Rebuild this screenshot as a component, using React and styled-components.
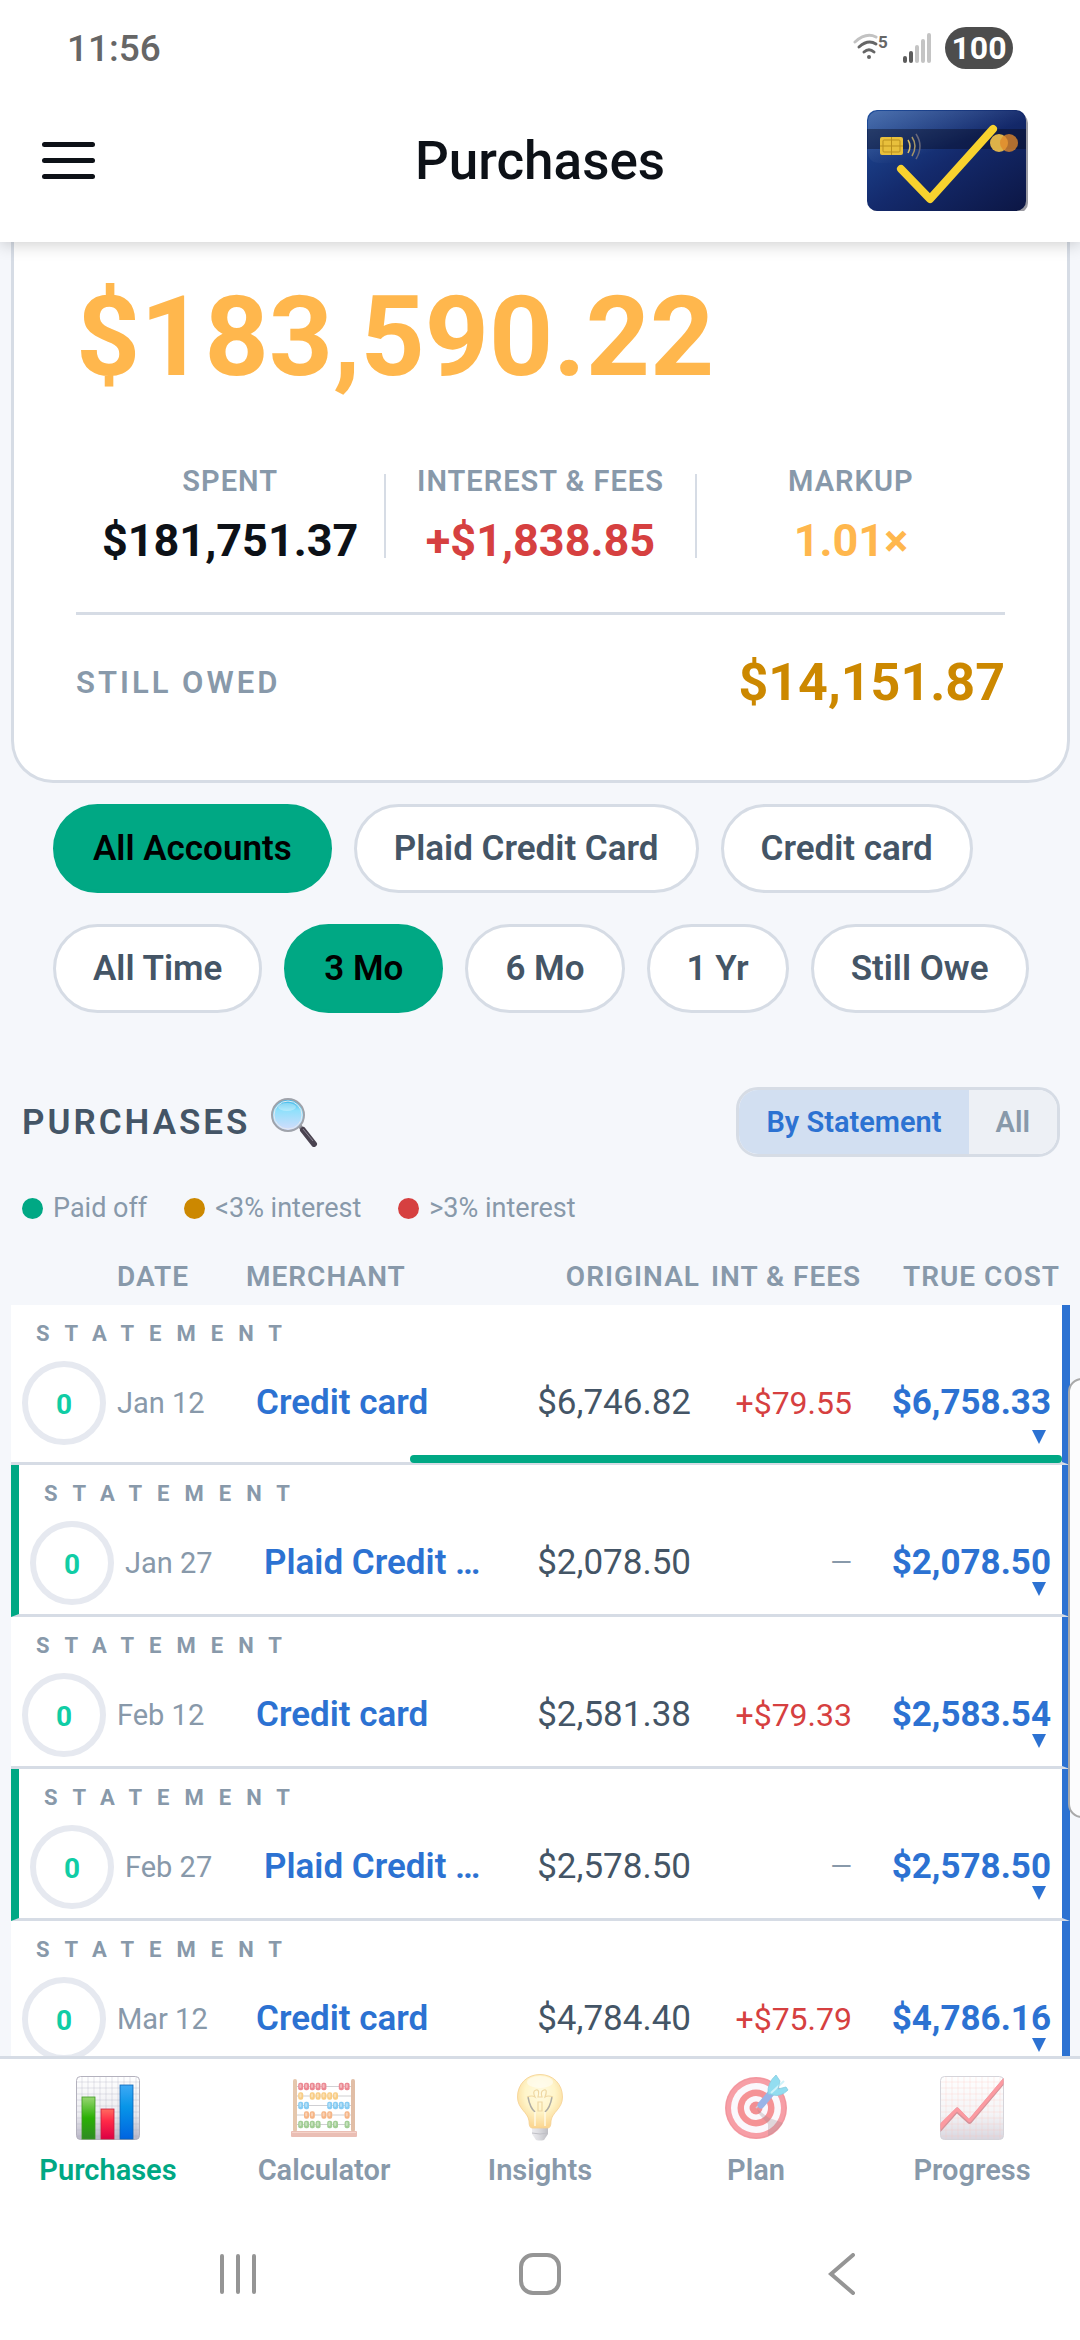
import React, { useState } from 'react';
import styled, { createGlobalStyle, css } from 'styled-components';

const colors = {
  page: '#f5f7fb',
  white: '#ffffff',
  ink: '#0d1117',
  slate: '#445566',
  muted: '#8899aa',
  border: '#d6dce5',
  green: '#00a884',
  amber: '#ffb74d',
  gold: '#cc8800',
  red: '#d64040',
  blue: '#2c72d2'
};

const GlobalStyle = createGlobalStyle`
  * {
    box-sizing: border-box;
  }
  body {
    margin: 0;
    background: ${colors.white};
    font-family: Roboto, "Noto Sans", sans-serif;
    color: ${colors.ink};
  }
  button {
    font: inherit;
    border: none;
    padding: 0;
    background: none;
    cursor: pointer;
  }
  a {
    color: inherit;
    text-decoration: none;
  }
  svg {
    display: block;
  }
`;

const Screen = styled.div`
  height: 100vh;
  display: flex;
  flex-direction: column;
  overflow: hidden;
`;

const StatusBar = styled.div`
  flex: none;
  position: relative;
  z-index: 2;
  height: 96px;
  padding: 0 67px;
  display: flex;
  align-items: center;
  justify-content: space-between;
  background: ${colors.white};
`;

const Clock = styled.span`
  font-size: 37px;
  font-weight: 500;
  color: #666666;
`;

const StatusIcons = styled.div`
  display: flex;
  align-items: center;
  gap: 14px;
`;

const Battery = styled.span`
  width: 68px;
  height: 42px;
  border-radius: 21px;
  background: #4d4d4d;
  color: ${colors.white};
  font-size: 32px;
  line-height: 43px;
  font-weight: 700;
  text-align: center;
`;

const Header = styled.header`
  flex: none;
  position: relative;
  z-index: 1;
  display: grid;
  grid-template-columns: 1fr auto 1fr;
  align-items: center;
  padding: 14px 42px 31px;
  background: ${colors.white};
  box-shadow: 0 2px 16px rgba(0, 0, 0, 0.2);
`;

const MenuButton = styled.button`
  width: 53px;
  display: flex;
  flex-direction: column;
  gap: 11px;
`;

const MenuLine = styled.span`
  height: 5px;
  border-radius: 3px;
  background: ${colors.ink};
`;

const Title = styled.h1`
  margin: 0;
  font-size: 53px;
  line-height: 60px;
  font-weight: 500;
`;

const Logo = styled.div`
  justify-self: end;
  padding-right: 10px;
`;

const Content = styled.main`
  flex: 1 1 0;
  min-height: 0;
  overflow: hidden;
  padding: 0 10px 0 11px;
  background: ${colors.page};
`;

const SummaryCard = styled.section`
  padding: 28px 62px 67px;
  background: ${colors.white};
  border: 3px solid ${colors.border};
  border-top: none;
  border-radius: 0 0 42px 42px;
`;

const Total = styled.div`
  font-size: 112px;
  line-height: 134px;
  font-weight: 700;
  color: ${colors.amber};
`;

const Stats = styled.div`
  display: flex;
  align-items: center;
  margin: 60px 0 44px;
`;

const Stat = styled.div`
  flex: 1 1 0;
  display: flex;
  flex-direction: column;
  align-items: center;
  gap: 16px;
`;

const StatLabel = styled.span`
  font-size: 29px;
  line-height: 34px;
  font-weight: 600;
  letter-spacing: 1px;
  color: ${colors.muted};
`;

const StatValue = styled.span`
  font-size: 45px;
  line-height: 54px;
  font-weight: 700;
  color: ${({ $color }) => $color};
`;

const StatDivider = styled.span`
  width: 2px;
  height: 84px;
  background: ${colors.border};
`;

const OwedRow = styled.div`
  display: flex;
  align-items: center;
  justify-content: space-between;
  padding-top: 38px;
  border-top: 3px solid ${colors.border};
  line-height: 60px;
`;

const OwedLabel = styled.span`
  font-size: 31px;
  font-weight: 600;
  letter-spacing: 3px;
  color: ${colors.muted};
`;

const OwedValue = styled.span`
  font-size: 52px;
  font-weight: 700;
  color: ${colors.gold};
`;

const Filters = styled.div`
  display: flex;
  flex-direction: column;
  gap: 31px;
  padding: 21px 42px 0;
`;

const ChipRow = styled.div`
  display: flex;
  gap: 22px;
`;

const Chip = styled.button`
  && {
    height: 89px;
    padding: 0 37px;
    border: 3px solid ${({ $active }) => ($active ? colors.green : colors.border)};
    border-radius: 45px;
    background: ${({ $active }) => ($active ? colors.green : colors.white)};
    color: ${({ $active }) => ($active ? '#000000' : colors.slate)};
    font-size: 35px;
    font-weight: 600;
    white-space: nowrap;
  }
`;

const SectionHead = styled.div`
  display: flex;
  align-items: center;
  justify-content: space-between;
  margin-top: 74px;
  padding: 0 10px 0 11px;
`;

const SectionTitle = styled.h2`
  display: flex;
  align-items: center;
  gap: 20px;
  margin: 0;
  font-size: 35px;
  font-weight: 600;
  letter-spacing: 3px;
  color: ${colors.slate};
`;

const Segmented = styled.div`
  display: flex;
  height: 70px;
  border: 3px solid ${colors.border};
  border-radius: 22px;
  overflow: hidden;
`;

const Segment = styled.button`
  && {
    padding: 0 27px;
    font-size: 29px;
    font-weight: 600;
    color: ${({ $active }) => ($active ? colors.blue : colors.muted)};
    background: ${({ $active }) => ($active ? '#d2dff1' : '#edf0f5')};
  }
`;

const Legend = styled.div`
  display: flex;
  gap: 37px;
  margin-top: 34px;
  padding: 0 11px;
`;

const LegendItem = styled.span`
  display: flex;
  align-items: center;
  gap: 10px;
  font-size: 27px;
  line-height: 34px;
  color: ${colors.muted};
`;

const Dot = styled.span`
  width: 21px;
  height: 21px;
  border-radius: 50%;
  background: ${({ $color }) => $color};
`;

const Table = styled.table`
  display: block;
  margin-top: 35px;
`;

const TableHead = styled.thead`
  display: block;
`;

const TableBody = styled.tbody`
  display: block;
`;

const columns = css`
  display: grid;
  grid-template-columns: 84px 118px minmax(0, 1fr) 178px 150px 188px;
  column-gap: 11px;
  align-items: center;
`;

const HeadRow = styled.tr`
  ${columns}
  padding: 0 10px 11px 11px;
`;

const HeadCell = styled.th`
  padding: 0;
  font-size: 28px;
  line-height: 34px;
  font-weight: 600;
  letter-spacing: 1px;
  white-space: nowrap;
  text-align: ${({ $right }) => ($right ? 'right' : 'left')};
  color: ${colors.muted};
`;

const Row = styled.tr`
  ${columns}
  position: relative;
  padding: 16px 11px ${({ $hasBar }) => ($hasBar ? '17px' : '9px')};
  background: ${colors.white};
  border-bottom: 3px solid ${colors.border};
  border-right: 8px solid ${colors.blue};
  border-left: ${({ $paid }) => ($paid ? `8px solid ${colors.green}` : 'none')};
`;

const RowLabel = styled.td`
  grid-column: 1 / -1;
  padding: 0 0 14px 14px;
  font-size: 22px;
  line-height: 26px;
  font-weight: 700;
  letter-spacing: 15px;
  color: ${colors.muted};
`;

const Cell = styled.td`
  padding: 0;
  line-height: 42px;
  white-space: nowrap;
`;

const Ring = styled.span`
  display: block;
  width: 84px;
  height: 84px;
  border: 6px solid #e6e9f0;
  border-radius: 50%;
  font-size: 28px;
  line-height: 76px;
  font-weight: 700;
  text-align: center;
  color: #10cda5;
`;

const DateCell = styled(Cell)`
  font-size: 29px;
  color: ${colors.muted};
`;

const MerchantCell = styled(Cell)`
  padding-left: 10px;
  overflow: hidden;
  text-overflow: ellipsis;
  font-size: 35px;
  font-weight: 600;
  color: ${colors.blue};
`;

const OriginalCell = styled(Cell)`
  font-size: 35px;
  text-align: right;
  color: ${colors.slate};
`;

const FeeCell = styled(Cell)`
  font-size: ${({ $empty }) => ($empty ? '28px' : '32px')};
  text-align: right;
  color: ${({ $empty }) => ($empty ? colors.muted : colors.red)};
`;

const CostCell = styled(Cell)`
  font-size: 35px;
  font-weight: 700;
  text-align: right;
  color: ${colors.blue};
`;

const ExpandButton = styled.button`
  && {
    position: absolute;
    right: 16px;
    bottom: 18px;
  }
`;

const PaidBar = styled.span`
  position: absolute;
  right: 0;
  bottom: -1px;
  height: 8px;
  border-radius: 4px;
  background: ${colors.green};
`;

const EdgeHandle = styled.div`
  position: absolute;
  z-index: 2;
  top: 1378px;
  right: -24px;
  width: 36px;
  height: 440px;
  border: 2px solid #a9a9a9;
  border-radius: 14px;
  background: #fcfcfd;
`;

const BottomNav = styled.nav`
  flex: none;
  display: grid;
  grid-template-columns: repeat(5, 1fr);
  padding: 15px 0 21px;
  border-top: 3px solid ${colors.border};
  background: ${colors.white};
`;

const NavItem = styled.a`
  display: flex;
  flex-direction: column;
  align-items: center;
  gap: 11px;
  font-size: 29px;
  line-height: 34px;
  font-weight: 600;
  color: ${({ $active }) => ($active ? colors.green : colors.muted)};

  svg {
    opacity: ${({ $active }) => ($active ? 1 : 0.55)};
  }
`;

const SystemBar = styled.div`
  flex: none;
  height: 132px;
  padding: 0 87px;
  display: grid;
  grid-template-columns: repeat(3, 1fr);
  place-items: center;
  background: ${colors.white};
`;

const WifiIcon = () => (
  <svg width="36" height="30" viewBox="0 0 36 30" fill="none" strokeLinecap="round" strokeWidth="3">
    <path d="M2 9 Q13 -1 23 4" stroke="#c2c2c2" />
    <path d="M6 14 Q15 6 23 11" stroke="#666" />
    <path d="M11 19 Q16 14.500 21 19" stroke="#666" />
    <circle cx="16" cy="24" r="2" fill="#666" />
    <text x="25" y="15" fill="#666" fontSize="17" fontWeight="700" fontFamily="Roboto">5</text>
  </svg>
);

const SignalIcon = () => (
  <svg width="28" height="30" viewBox="0 0 28 30" strokeLinecap="round" strokeWidth="4">
    <path d="M2 25v3M8 20v8" stroke="#5c5c5c" />
    <path d="M14 14v14M20 8v20M26 2v26" stroke="#c4c4c4" />
  </svg>
);

const CardLogo = () => (
  <svg width="162" height="101" viewBox="0 0 162 101" fill="none">
    <defs>
      <linearGradient id="cardBase" x1="0" y1="0" x2="1" y2="1">
        <stop offset="0" stopColor="#1f4e9c" />
        <stop offset="0.5" stopColor="#142a6c" />
        <stop offset="1" stopColor="#0c1644" />
      </linearGradient>
      <linearGradient id="cardShine" x1="0" y1="0" x2="0.6" y2="0.6">
        <stop offset="0" stopColor="#fff" stopOpacity="0.2" />
        <stop offset="1" stopColor="#fff" stopOpacity="0" />
      </linearGradient>
    </defs>
    <rect x="4" y="3" width="158" height="100" rx="10" fill="#9b9ba3" />
    <rect x="1" y="0" width="159" height="101" rx="10" fill="url(#cardBase)" />
    <rect x="2" y="1" width="157" height="52" rx="10" fill="url(#cardShine)" />
    <rect x="1" y="19" width="159" height="20" fill="#06091c" fillOpacity="0.42" />
    <rect x="14" y="27" width="23" height="18" rx="2" fill="#e8c03c" />
    <rect x="17" y="30" width="17" height="12" rx="1" stroke="#b98f1c" />
    <path d="M25.500 27v18M14 36h23" stroke="#b98f1c" />
    <path d="M42 30q4 6 0 13" stroke="#d9bd6a" strokeWidth="1.500" />
    <path d="M46 27q6 9 0 19" stroke="#a69566" strokeWidth="1.500" />
    <path d="M50 24q8 12 0 25" stroke="#68687a" strokeWidth="1.500" />
    <path d="M35 59L64 89L127 19" stroke="#f8d22e" strokeWidth="8" strokeLinecap="round" strokeLinejoin="round" />
    <circle cx="133" cy="33" r="9" fill="#e9bb4a" fillOpacity="0.95" />
    <circle cx="143" cy="33" r="9" fill="#e0882a" fillOpacity="0.78" />
  </svg>
);

const SearchIcon = () => (
  <svg width="48" height="50" viewBox="0 0 48 50">
    <defs>
      <linearGradient id="lens" x1="0" y1="0" x2="0" y2="1">
        <stop offset="0" stopColor="#35b4e8" />
        <stop offset="0.35" stopColor="#8fe0fb" />
        <stop offset="1" stopColor="#d6dcfb" />
      </linearGradient>
    </defs>
    <path d="M29 28l4 5" stroke="#8b8b93" strokeWidth="4" />
    <path d="M33 33l11 14" stroke="#4a4350" strokeWidth="6" strokeLinecap="round" />
    <path d="M33 32l10 12" stroke="#8a8592" strokeWidth="1" />
    <circle cx="18" cy="18" r="16" fill="url(#lens)" stroke="#9fa3ab" strokeWidth="2" />
    <circle cx="18" cy="18" r="14" fill="none" stroke="#e3e9f0" strokeWidth="1" />
    <ellipse cx="17" cy="10" rx="9" ry="4" fill="#fff" fillOpacity="0.3" />
  </svg>
);

const gridLines = [6, 12, 18, 24, 30, 36, 42, 48, 54, 60];

const BarsIcon = () => (
  <svg width="68" height="68" viewBox="-2 -2 68 68">
    <defs>
      <linearGradient id="paper" x1="0" y1="0" x2="0" y2="1">
        <stop offset="0" stopColor="#fff" />
        <stop offset="0.6" stopColor="#ececf0" />
        <stop offset="1" stopColor="#b9b6c6" />
      </linearGradient>
      <linearGradient id="barGreen" x1="0" y1="0" x2="0" y2="1">
        <stop offset="0" stopColor="#98d672" />
        <stop offset="0.5" stopColor="#2bb005" />
        <stop offset="1" stopColor="#2f8a24" />
      </linearGradient>
      <linearGradient id="barRed" x1="0" y1="0" x2="0" y2="1">
        <stop offset="0" stopColor="#ff6b60" />
        <stop offset="0.4" stopColor="#ff2a48" />
        <stop offset="1" stopColor="#dc0044" />
      </linearGradient>
      <linearGradient id="barBlue" x1="0" y1="0" x2="0" y2="1">
        <stop offset="0" stopColor="#3fa9f5" />
        <stop offset="0.4" stopColor="#0795e8" />
        <stop offset="1" stopColor="#0064e0" />
      </linearGradient>
    </defs>
    <rect x="0.500" y="0.500" width="63" height="63" rx="4" fill="url(#paper)" stroke="#b3b1bd" />
    {gridLines.map(n => (
      <path key={n} d={`M${n} 1v62M1 ${n}h62`} stroke="#a8a8b8" strokeOpacity="0.3" />
    ))}
    <rect x="6" y="21" width="13" height="42" fill="url(#barGreen)" stroke="#3f9a22" strokeWidth="0.800" />
    <rect x="25" y="33" width="13" height="30" fill="url(#barRed)" stroke="#c91c3c" strokeWidth="0.800" />
    <rect x="44" y="9" width="13" height="54" fill="url(#barBlue)" stroke="#0a63b5" strokeWidth="0.800" />
  </svg>
);

const beadRows = [
  { color: '#dd2a3c', beads: [0, 1, 2, 3, 4, 7, 8] },
  { color: '#f5a623', beads: [0, 2, 3, 4, 5, 6] },
  { color: '#26a3ea', beads: [0, 1, 5, 6, 7, 8] },
  { color: '#f07a24', beads: [1, 2, 4, 5, 8] },
  { color: '#57a63f', beads: [0, 1, 2, 3, 5, 6, 8] }
];

const AbacusIcon = () => (
  <svg width="68" height="68" viewBox="-1 -5 68 68">
    {beadRows.map(({ color, beads }, row) => (
      <g key={color}>
        <path d={`M5 ${7.5 + row * 9.5}h56`} stroke="#a9a9b0" strokeWidth="1.200" />
        {beads.map(slot => (
          <g key={slot}>
            <rect x={7.2 + slot * 5.8} y={3.8 + row * 9.5} width="5" height="7.500" rx="2" fill={color} />
            <rect x={8.4 + slot * 5.8} y={5 + row * 9.5} width="2" height="4" rx="1" fill="#fff" fillOpacity="0.4" />
          </g>
        ))}
      </g>
    ))}
    <rect x="2" y="0" width="4" height="53" rx="2" fill="#d19a6a" />
    <rect x="60" y="0" width="4" height="53" rx="2" fill="#c98a5e" />
    <rect x="0" y="52" width="66" height="6" rx="1" fill="#d98a78" />
    <path d="M1 53.500h64" stroke="#edb09d" />
  </svg>
);

const BulbIcon = () => (
  <svg width="68" height="68" viewBox="-11 0 68 68" fill="none">
    <defs>
      <radialGradient id="glass" cx="0.5" cy="0.36" r="0.62">
        <stop offset="0" stopColor="#fff8cc" />
        <stop offset="0.55" stopColor="#ffec9c" />
        <stop offset="1" stopColor="#f8b73c" />
      </radialGradient>
      <linearGradient id="screw" x1="0" y1="0" x2="1" y2="0">
        <stop offset="0" stopColor="#dedee3" />
        <stop offset="0.4" stopColor="#c3c3cb" />
        <stop offset="1" stopColor="#8a8a94" />
      </linearGradient>
    </defs>
    <path d="M15 52h16v8l-4 6q-4 1 -8 0l-4 -6z" fill="url(#screw)" />
    <path d="M15 59q8 2 16 0" stroke="#8d8d97" />
    <path d="M23 0.500C10 0.500 0.500 10 0.500 23C0.500 35 11 38 12 47Q12 54 15 54H31Q34 54 34 47C35 38 45.500 35 45.500 23C45.500 10 36 0.500 23 0.500Z" fill="url(#glass)" stroke="#edab38" strokeWidth="0.800" />
    <path d="M11 23Q13 34 18 38M35 23Q33 34 28 38" stroke="#6f6a5c" strokeWidth="1.500" />
    <path d="M18 38v14M28 38v14" stroke="#fff6cf" strokeWidth="1.500" />
    <path d="M10 23q5 -2 8 0q-3 -6 1 -7t2 7h4q-2 -6 2 -7t1 7q3 -2 8 0M21 28h4v9h-4z" stroke="#e3b858" strokeWidth="1.200" />
    <ellipse cx="23" cy="8" rx="13" ry="6" fill="#fff" fillOpacity="0.5" />
  </svg>
);

const TargetIcon = () => (
  <svg width="68" height="68" viewBox="-3 -2 68 68" fill="none">
    <circle cx="31" cy="32" r="31" fill="#f2505e" />
    <circle cx="31" cy="32" r="30" stroke="#d62b3c" strokeOpacity="0.5" />
    <circle cx="31" cy="32" r="25" fill="#f8f4fa" />
    <circle cx="31" cy="32" r="18.500" fill="#ee3a40" />
    <circle cx="31" cy="32" r="12" fill="#f8f4fa" />
    <circle cx="31" cy="32" r="6.500" fill="#e9343c" />
    <path d="M32 33l12 9l9 3l5 2q-6 9 -15 13v-12l-9 -10z" fill="#542a35" fillOpacity="0.3" />
    <path d="M31 32l6 -6" stroke="#aab" strokeWidth="1.500" />
    <path d="M36 29l11 -13" stroke="#4777d4" strokeWidth="7" strokeLinecap="round" />
    <path d="M43 18q-1 -11 8 -19l4 6l-2 8l8 -2l2 3q-7 7 -15 5z" fill="#3cc2e4" />
    <path d="M46 17l13 -12" stroke="#a7e8f5" strokeWidth="2" />
    <path d="M43 18q-1 -11 8 -19l4 6l-2 8l8 -2l2 3q-7 7 -15 5z" stroke="#24a3c6" strokeWidth="0.800" />
  </svg>
);

const TrendIcon = () => (
  <svg width="68" height="68" viewBox="-2 -2 68 68" fill="none">
    <rect x="0.500" y="0.500" width="63" height="63" rx="4" fill="url(#paper)" stroke="#b3b1bd" />
    {gridLines.map(n => (
      <path key={n} d={`M${n} 1v62M1 ${n}h62`} stroke="#ff8a7a" strokeOpacity="0.25" />
    ))}
    <path d="M0.500 48L16.500 31.500Q17.500 31 18.500 32L29 43L63.500 2V9L31.500 47Q29.500 49 27.500 47L17 37.500L0.500 56Z" fill="#b43b48" />
    <path d="M0.500 47L16 32Q17 31 18.500 32L29 43L63.500 2V7.500L31 45.500Q29.500 47 28 45.500L17 35.500L0.500 54Z" fill="#fa4855" />
  </svg>
);

const accounts = ['All Accounts', 'Plaid Credit Card', 'Credit card'];
const periods = ['All Time', '3 Mo', '6 Mo', '1 Yr', 'Still Owe'];
const views = ['By Statement', 'All'];

const legend = [
  { label: 'Paid off', color: colors.green },
  { label: '<3% interest', color: colors.gold },
  { label: '>3% interest', color: colors.red }
];

const statements = [
  { date: 'Jan 12', merchant: 'Credit card', original: '$6,746.82', fees: '+$79.55', cost: '$6,758.33', bar: 62 },
  { date: 'Jan 27', merchant: 'Plaid Credit Card', original: '$2,078.50', cost: '$2,078.50', paid: true },
  { date: 'Feb 12', merchant: 'Credit card', original: '$2,581.38', fees: '+$79.33', cost: '$2,583.54' },
  { date: 'Feb 27', merchant: 'Plaid Credit Card', original: '$2,578.50', cost: '$2,578.50', paid: true },
  { date: 'Mar 12', merchant: 'Credit card', original: '$4,784.40', fees: '+$75.79', cost: '$4,786.16' }
];

const tabs = [
  { label: 'Purchases', Icon: BarsIcon },
  { label: 'Calculator', Icon: AbacusIcon },
  { label: 'Insights', Icon: BulbIcon },
  { label: 'Plan', Icon: TargetIcon },
  { label: 'Progress', Icon: TrendIcon }
];

const Chips = ({ options, value, onSelect }) => (
  <ChipRow>
    {options.map(option => (
      <Chip
        key={option}
        type="button"
        $active={option === value}
        aria-pressed={option === value}
        onClick={() => onSelect(option)}
      >
        {option}
      </Chip>
    ))}
  </ChipRow>
);

const Statement = ({ date, merchant, original, fees, cost, bar, paid }) => (
  <Row $paid={paid} $hasBar={!!bar}>
    <RowLabel>STATEMENT</RowLabel>
    <Cell><Ring>0</Ring></Cell>
    <DateCell>{date}</DateCell>
    <MerchantCell><a href="#statement">{merchant}</a></MerchantCell>
    <OriginalCell>{original}</OriginalCell>
    <FeeCell $empty={!fees}>{fees || '—'}</FeeCell>
    <CostCell>
      {cost}
      <ExpandButton type="button" aria-label={`Expand ${date}`}>
        <svg width="14" height="14" viewBox="0 0 14 14">
          <path d="M0 0h14l-7 14z" fill={colors.blue} />
        </svg>
      </ExpandButton>
      {bar && <PaidBar style={{ width: `${bar}%` }} />}
    </CostCell>
  </Row>
);

const App = () => {
  const [account, setAccount] = useState('All Accounts');
  const [period, setPeriod] = useState('3 Mo');
  const [view, setView] = useState('By Statement');

  return (
    <Screen>
      <GlobalStyle />
      <StatusBar>
        <Clock>11:56</Clock>
        <StatusIcons>
          <WifiIcon />
          <SignalIcon />
          <Battery>100</Battery>
        </StatusIcons>
      </StatusBar>

      <Header>
        <MenuButton type="button" aria-label="Menu">
          <MenuLine />
          <MenuLine />
          <MenuLine />
        </MenuButton>
        <Title>Purchases</Title>
        <Logo><CardLogo /></Logo>
      </Header>

      <Content>
        <SummaryCard>
          <Total>$183,590.22</Total>
          <Stats>
            <Stat>
              <StatLabel>SPENT</StatLabel>
              <StatValue $color={colors.ink}>$181,751.37</StatValue>
            </Stat>
            <StatDivider />
            <Stat>
              <StatLabel>INTEREST &amp; FEES</StatLabel>
              <StatValue $color={colors.red}>+$1,838.85</StatValue>
            </Stat>
            <StatDivider />
            <Stat>
              <StatLabel>MARKUP</StatLabel>
              <StatValue $color={colors.amber}>1.01×</StatValue>
            </Stat>
          </Stats>
          <OwedRow>
            <OwedLabel>STILL OWED</OwedLabel>
            <OwedValue>$14,151.87</OwedValue>
          </OwedRow>
        </SummaryCard>

        <Filters>
          <Chips options={accounts} value={account} onSelect={setAccount} />
          <Chips options={periods} value={period} onSelect={setPeriod} />
        </Filters>

        <SectionHead>
          <SectionTitle>
            PURCHASES
            <button type="button" aria-label="Search"><SearchIcon /></button>
          </SectionTitle>
          <Segmented>
            {views.map(name => (
              <Segment key={name} type="button" $active={name === view} onClick={() => setView(name)}>
                {name}
              </Segment>
            ))}
          </Segmented>
        </SectionHead>

        <Legend>
          {legend.map(({ label, color }) => (
            <LegendItem key={label}>
              <Dot $color={color} />
              {label}
            </LegendItem>
          ))}
        </Legend>

        <Table>
          <TableHead>
            <HeadRow>
              <HeadCell aria-label="Score" />
              <HeadCell>DATE</HeadCell>
              <HeadCell>MERCHANT</HeadCell>
              <HeadCell $right>ORIGINAL</HeadCell>
              <HeadCell $right>INT &amp; FEES</HeadCell>
              <HeadCell $right>TRUE COST</HeadCell>
            </HeadRow>
          </TableHead>
          <TableBody>
            {statements.map(statement => (
              <Statement key={statement.date} {...statement} />
            ))}
          </TableBody>
        </Table>
      </Content>

      <EdgeHandle />

      <BottomNav>
        {tabs.map(({ label, Icon }, index) => (
          <NavItem key={label} href={`#${label.toLowerCase()}`} $active={index === 0}>
            <Icon />
            {label}
          </NavItem>
        ))}
      </BottomNav>

      <SystemBar>
        <button type="button" aria-label="Recent apps">
          <svg width="38" height="42" viewBox="0 0 38 42" stroke="#959595" strokeWidth="4" strokeLinecap="round">
            <path d="M3 3v36M19 3v36M35 3v36" />
          </svg>
        </button>
        <button type="button" aria-label="Home">
          <svg width="42" height="42" viewBox="0 0 42 42" fill="none" stroke="#959595" strokeWidth="4">
            <rect x="2" y="2" width="38" height="38" rx="12" />
          </svg>
        </button>
        <button type="button" aria-label="Back">
          <svg width="28" height="42" viewBox="0 0 28 42" fill="none" stroke="#959595" strokeWidth="4" strokeLinecap="round">
            <path d="M25 2L3 21L25 40" />
          </svg>
        </button>
      </SystemBar>
    </Screen>
  );
};

export default App;
